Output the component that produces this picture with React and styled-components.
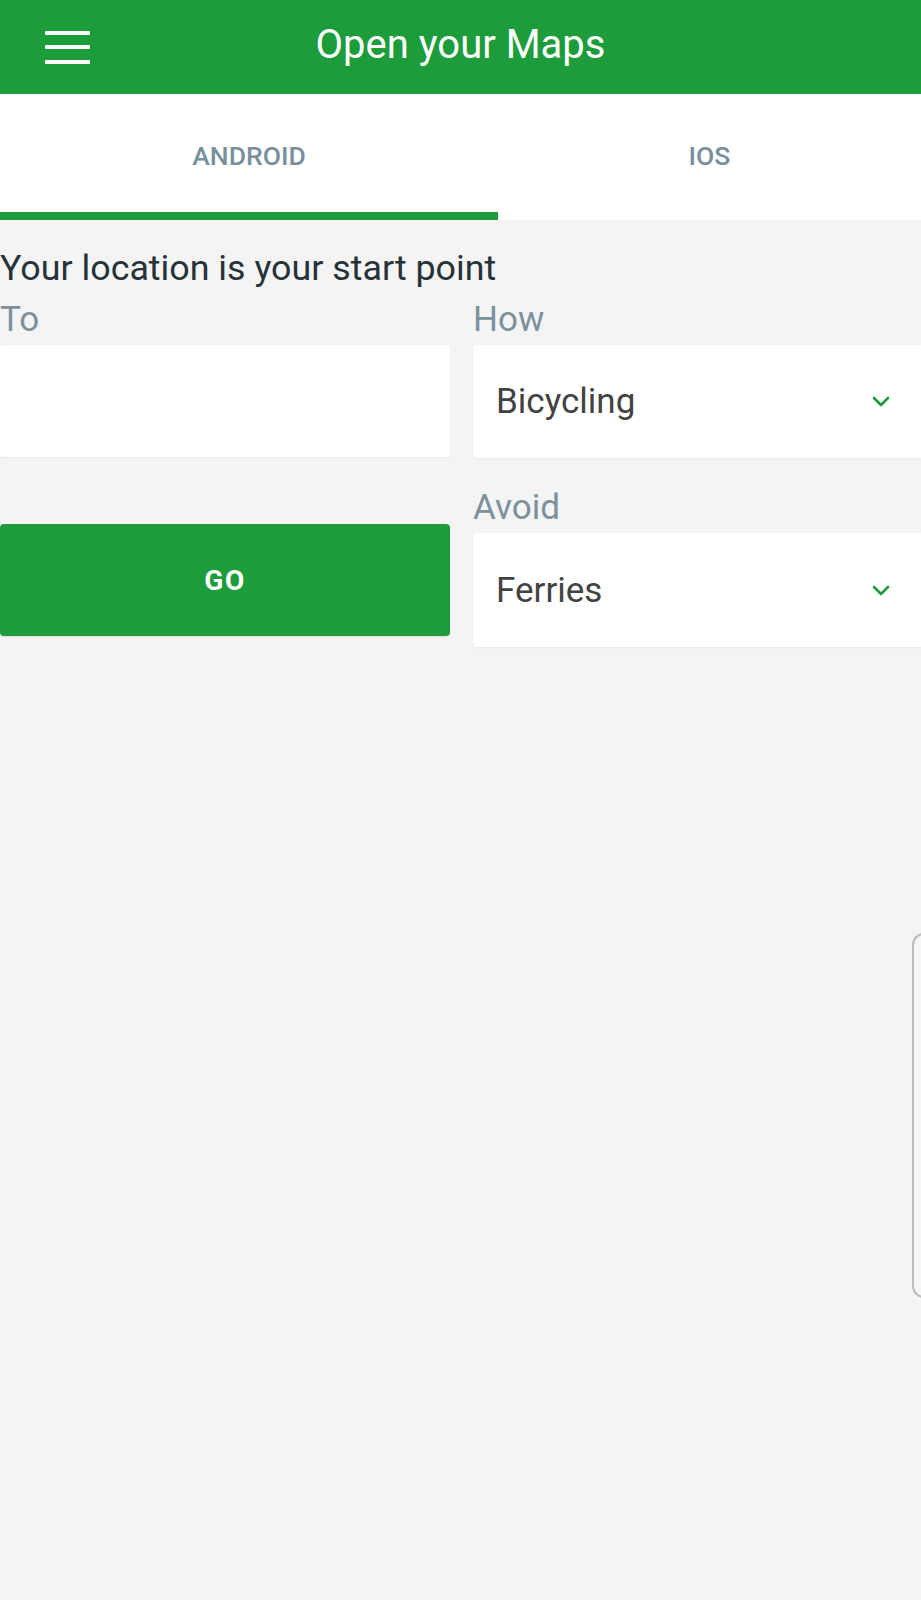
import React, { useState } from "react";
import styled, { createGlobalStyle } from "styled-components";

const GREEN = "#1c9c3b";

const GlobalStyle = createGlobalStyle`
  html, body {
    margin: 0;
    padding: 0;
    background: #f4f4f4;
    overflow-x: hidden;
    font-family: Roboto, "Noto Sans", Arial, sans-serif;
  }
  * { box-sizing: border-box; }
`;

export default function App() {
  const [tab, setTab] = useState("android");
  const [how, setHow] = useState("Bicycling");
  const [avoid, setAvoid] = useState("Ferries");

  return (
    <>
      <GlobalStyle />
      <Page>
        <Header>
          <MenuButton aria-label="menu">
            <span />
            <span />
            <span />
          </MenuButton>
          <Title>Open your Maps</Title>
          <div />
        </Header>

        <Tabs>
          <Tab
            $width="498px"
            $active={tab === "android"}
            onClick={() => setTab("android")}
          >
            ANDROID
          </Tab>
          <Tab $width="auto" $active={tab === "ios"} onClick={() => setTab("ios")}>
            IOS
          </Tab>
        </Tabs>

        <Main>
          <Heading>Your location is your start point</Heading>
          <Form>
            <Field>
              <Label>To</Label>
              <Input type="text" />
            </Field>
            <Field>
              <Label>How</Label>
              <SelectBox>
                <SelectValue>{how}</SelectValue>
                <Chevron />
                <HiddenSelect value={how} onChange={(e) => setHow(e.target.value)}>
                  <option>Driving</option>
                  <option>Walking</option>
                  <option>Bicycling</option>
                  <option>Transit</option>
                </HiddenSelect>
              </SelectBox>
            </Field>
            <GoButton>GO</GoButton>
            <Field>
              <Label $gap>Avoid</Label>
              <SelectBox $tall>
                <SelectValue>{avoid}</SelectValue>
                <Chevron />
                <HiddenSelect value={avoid} onChange={(e) => setAvoid(e.target.value)}>
                  <option>Tolls</option>
                  <option>Highways</option>
                  <option>Ferries</option>
                </HiddenSelect>
              </SelectBox>
            </Field>
          </Form>
        </Main>

        <EdgeHandle />
      </Page>
    </>
  );
}

function Chevron() {
  return (
    <ChevronSvg viewBox="0 0 18 11" fill="none">
      <path d="M2 2 L9 9 L16 2" stroke={GREEN} strokeWidth="2.6" strokeLinecap="round" strokeLinejoin="round" />
    </ChevronSvg>
  );
}

const Page = styled.div`
  position: relative;
  width: 921px;
  min-height: 1600px;
  background: #f4f4f4;
`;

const Header = styled.header`
  height: 94px;
  background: ${GREEN};
  display: grid;
  grid-template-columns: 1fr auto 1fr;
  align-items: center;
`;

const MenuButton = styled.button`
  margin-left: 45px;
  width: 45px;
  height: 33px;
  padding: 0;
  border: none;
  background: transparent;
  display: flex;
  flex-direction: column;
  justify-content: space-between;
  cursor: pointer;
  & span {
    display: block;
    height: 4px;
    border-radius: 1px;
    background: #fff;
  }
`;

const Title = styled.h1`
  margin: 0;
  color: #fff;
  font-size: 40px;
  font-weight: 400;
  line-height: 1;
  padding-bottom: 4px;
`;

const Tabs = styled.nav`
  display: flex;
  background: #fff;
`;

const Tab = styled.button`
  flex: ${({ $width }) => ($width === "auto" ? "1" : `0 0 ${$width}`)};
  height: 126px;
  border: none;
  background: #fff;
  border-bottom: 8px solid ${({ $active }) => ($active ? GREEN : "#fff")};
  padding: 4px 0 0;
  font-family: inherit;
  font-size: 26.5px;
  font-weight: 500;
  color: #78909c;
  cursor: pointer;
`;

const Main = styled.main`
  padding-top: 27px;
`;

const Heading = styled.h2`
  margin: 0;
  font-size: 35.8px;
  font-weight: 400;
  line-height: 42px;
  color: #263238;
`;

const Form = styled.div`
  margin-top: 11px;
  width: 923px;
  display: grid;
  grid-template-columns: 450px 450px;
  column-gap: 23px;
`;

const Field = styled.div`
  display: flex;
  flex-direction: column;
`;

const Label = styled.label`
  font-size: 35px;
  font-weight: 400;
  line-height: 40px;
  color: #7d919c;
  margin-top: ${({ $gap }) => ($gap ? "30px" : "0")};
  margin-bottom: 5px;
`;

const Input = styled.input`
  height: 112px;
  border: none;
  border-radius: 4px;
  background: #fff;
  box-shadow: 0 1px 2px rgba(0, 0, 0, 0.05);
  font-family: inherit;
  font-size: 34px;
  padding: 0 22px;
  outline: none;
`;

const SelectBox = styled.div`
  position: relative;
  height: ${({ $tall }) => ($tall ? "114px" : "113px")};
  border-radius: 4px;
  background: #fff;
  box-shadow: 0 1px 2px rgba(0, 0, 0, 0.05);
  display: flex;
  align-items: center;
  justify-content: space-between;
  padding: 0 33px 0 23px;
`;

const SelectValue = styled.span`
  font-size: 35px;
  color: #424242;
`;

const ChevronSvg = styled.svg`
  width: 18px;
  height: 11px;
`;

const HiddenSelect = styled.select`
  position: absolute;
  inset: 0;
  opacity: 0;
  cursor: pointer;
`;

const GoButton = styled.button`
  align-self: start;
  margin-top: 66px;
  height: 112px;
  border: none;
  border-radius: 4px;
  background: ${GREEN};
  color: #fff;
  font-family: inherit;
  font-size: 28px;
  font-weight: 700;
  letter-spacing: 1.5px;
  box-shadow: 0 1px 2px rgba(0, 0, 0, 0.1);
  cursor: pointer;
`;

const EdgeHandle = styled.div`
  position: absolute;
  left: 912px;
  top: 933px;
  width: 24px;
  height: 365px;
  border: 2px solid #bdbdbd;
  border-right: none;
  border-radius: 12px 0 0 12px;
  background: #f6f6f6;
`;
